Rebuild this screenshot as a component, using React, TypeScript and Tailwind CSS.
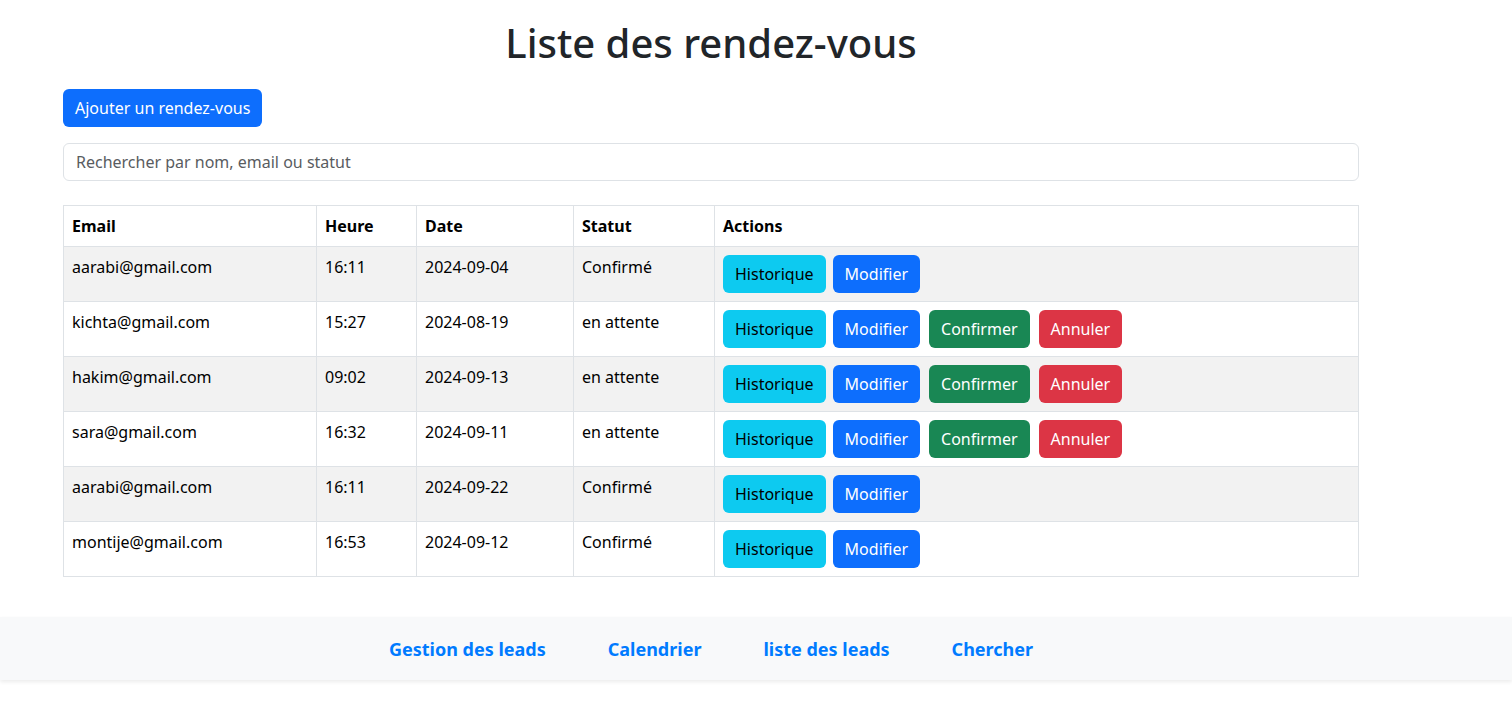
import { type ReactElement } from 'react';

type Rdv = { email: string; heure: string; date: string; statut: string };

const rdvs: Rdv[] = [
  { email: 'aarabi@gmail.com', heure: '16:11', date: '2024-09-04', statut: 'Confirmé' },
  { email: 'kichta@gmail.com', heure: '15:27', date: '2024-08-19', statut: 'en attente' },
  { email: 'hakim@gmail.com', heure: '09:02', date: '2024-09-13', statut: 'en attente' },
  { email: 'sara@gmail.com', heure: '16:32', date: '2024-09-11', statut: 'en attente' },
  { email: 'aarabi@gmail.com', heure: '16:11', date: '2024-09-22', statut: 'Confirmé' },
  { email: 'montije@gmail.com', heure: '16:53', date: '2024-09-12', statut: 'Confirmé' },
];

const Btn = ({ label, className }: { label: string; className: string }): ReactElement => (
  <button className={`h-[38px] px-3 rounded-[6px] text-base leading-6 ${className}`}>{label}</button>
);

const App = () => {
  return (
    <div className="min-h-[708px] bg-white text-[#212529] font-['Noto_Sans',sans-serif]">
      <div className="ml-[63px] w-[1296px]">
        <h1 className="pt-[19px] h-[67px] text-center text-[40px] leading-[48px] font-medium">Liste des rendez-vous</h1>
        <button className="mt-[22px] h-[38px] px-3 rounded-[6px] bg-[#0d6efd] text-white text-base leading-6">
          Ajouter un rendez-vous
        </button>
        <input
          type="text"
          placeholder="Rechercher par nom, email ou statut"
          className="block mt-4 w-full h-[38px] px-3 rounded-[6px] border border-[#dee2e6] text-base placeholder:text-[#595c5f] outline-none"
        />
        <table className="mt-6 w-full border-collapse border border-[#dee2e6] text-base leading-6 text-black">
          <thead>
            <tr className="h-[41px]">
              <th className="w-[253px] border border-[#dee2e6] px-2 text-left font-bold">Email</th>
              <th className="w-[100px] border border-[#dee2e6] px-2 text-left font-bold">Heure</th>
              <th className="w-[157px] border border-[#dee2e6] px-2 text-left font-bold">Date</th>
              <th className="w-[141px] border border-[#dee2e6] px-2 text-left font-bold">Statut</th>
              <th className="border border-[#dee2e6] px-2 text-left font-bold">Actions</th>
            </tr>
          </thead>
          <tbody>
            {rdvs.map((r, i) => (
              <tr key={i} className={i % 2 === 0 ? 'bg-[#f2f2f2]' : 'bg-white'}>
                <td className="border border-[#dee2e6] px-2 pt-2 align-top">{r.email}</td>
                <td className="border border-[#dee2e6] px-2 pt-2 align-top">{r.heure}</td>
                <td className="border border-[#dee2e6] px-2 pt-2 align-top">{r.date}</td>
                <td className="border border-[#dee2e6] px-2 pt-2 align-top">{r.statut}</td>
                <td className="border border-[#dee2e6] px-2 py-2">
                  <div className="flex">
                    <Btn label="Historique" className="bg-[#0dcaf0] text-black mr-[7px]" />
                    <Btn label="Modifier" className="bg-[#0d6efd] text-white mr-[9px]" />
                    {r.statut === 'en attente' && (
                      <>
                        <Btn label="Confirmer" className="bg-[#198754] text-white mr-[9px]" />
                        <Btn label="Annuler" className="bg-[#dc3545] text-white" />
                      </>
                    )}
                  </div>
                </td>
              </tr>
            ))}
          </tbody>
        </table>
      </div>
      <footer className="mt-10 h-[63px] bg-[#f8f9fa] shadow-[0_2px_4px_rgba(0,0,0,0.08)]">
        <nav className="ml-[63px] w-[1296px] h-full flex items-center justify-center gap-[62px]">
          <a href="#" className="text-[#007bff] text-lg font-bold">Gestion des leads</a>
          <a href="#" className="text-[#007bff] text-lg font-bold">Calendrier</a>
          <a href="#" className="text-[#007bff] text-lg font-bold">liste des leads</a>
          <a href="#" className="text-[#007bff] text-lg font-bold">Chercher</a>
        </nav>
      </footer>
    </div>
  );
};

export default App;
